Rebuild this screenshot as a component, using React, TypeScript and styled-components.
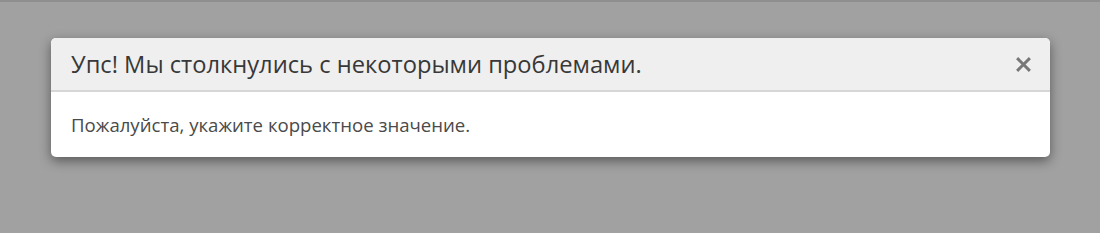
import React from 'react';
import styled, { createGlobalStyle } from 'styled-components';

const GlobalStyle = createGlobalStyle`
  html, body {
    margin: 0;
    padding: 0;
    background: #a1a1a1;
    font-family: "Open Sans", sans-serif;
  }
`;

const Backdrop = styled.div`
  height: 233px;
  background: #a1a1a1;
  border-top: 2px solid #8f8f8f;
  box-sizing: border-box;
  padding: 36px 50px 0 51px;
`;

const Modal = styled.div`
  width: 999px;
  background: #fff;
  border-radius: 5px;
  box-shadow: 0 4px 12px rgba(0, 0, 0, 0.45);
  overflow: hidden;
`;

const Header = styled.div`
  display: flex;
  align-items: center;
  justify-content: space-between;
  height: 52px;
  padding: 0 17px 0 20px;
  background: #efefef;
  border-bottom: 2px solid #d6d6d6;
`;

const Title = styled.h4`
  margin: 0;
  font-size: 23.7px;
  font-weight: 400;
  color: #383838;
`;

const Close = styled.button`
  border: 0;
  background: none;
  padding: 0;
  width: 20px;
  height: 20px;
  display: flex;
  align-items: center;
  justify-content: center;
  cursor: pointer;
`;

const Body = styled.div`
  height: 65px;
  padding: 0 20px;
  display: flex;
  align-items: center;
  font-size: 18.6px;
  color: #4a4a4a;
`;

export default function App() {
  return (
    <>
      <GlobalStyle />
      <Backdrop>
        <Modal>
          <Header>
            <Title>Упс! Мы столкнулись с некоторыми проблемами.</Title>
            <Close aria-label="Закрыть">
              <svg width="17" height="17" viewBox="0 0 16 16">
                <path d="M2 2L14 14M14 2L2 14" stroke="#777" strokeWidth="2.8" />
              </svg>
            </Close>
          </Header>
          <Body>Пожалуйста, укажите корректное значение.</Body>
        </Modal>
      </Backdrop>
    </>
  );
}
